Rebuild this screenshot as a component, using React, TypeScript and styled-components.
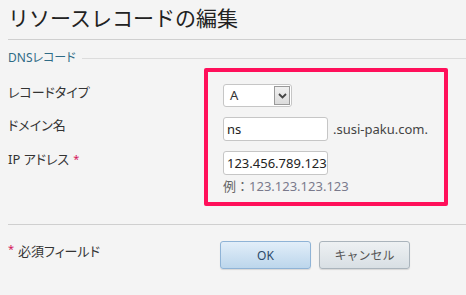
import { createGlobalStyle, styled } from "styled-components"

const Global = createGlobalStyle`
  html, body {
    margin: 0;
    background: #f4f4f4;
  }
  body {
    font-family: "Noto Sans", "Noto Sans CJK JP", sans-serif;
    color: #333;
  }
`

const Page = styled.div`
  position: relative;
  width: 466px;
  height: 295px;
  overflow: hidden;
  padding: 0 0 0 8px;
  box-sizing: border-box;
`

const Title = styled.h1`
  margin: 0;
  padding-top: 4px;
  height: 35px;
  font-size: 21px;
  font-weight: normal;
  line-height: 28px;
  color: #222;
  border-bottom: 1px solid #cfcfcf;
`

const Legend = styled.div`
  display: flex;
  align-items: center;
  gap: 6px;
  margin-top: 10px;
  font-size: 12px;
  line-height: 16px;
  color: #2f6b86;
  font-feature-settings: "palt";

  &::after {
    content: "";
    flex: 1;
    border-top: 1px solid #dcdcdc;
  }
`

const Rows = styled.div`
  display: flex;
  flex-direction: column;
  gap: 10px;
  margin-top: 18px;
`

const Row = styled.div`
  display: grid;
  grid-template-columns: 215px auto;
  align-items: start;
`

const Label = styled.div`
  font-size: 13px;
  line-height: 16px;
  font-feature-settings: "palt";
`

const Req = styled.span`
  color: #d4145a;
  font-size: 11px;
  margin-left: 4px;
  vertical-align: top;
`

const Field = styled.div`
  display: flex;
  align-items: center;
  gap: 5px;
`

const Select = styled.div`
  display: flex;
  width: 69px;
  height: 23px;
  box-sizing: border-box;
  border: 1px solid #c6c6c6;
  border-radius: 3px;
  background: #fff;
  font-size: 13px;
`

const SelectValue = styled.div`
  flex: 1;
  padding-left: 6px;
  line-height: 21px;
`

const Arrow = styled.div`
  width: 16px;
  margin: 1px;
  display: grid;
  place-items: center;
  background: linear-gradient(#f0f0f0, #dcdcdc);
  border: 1px solid #9a9a9a;
  box-sizing: border-box;
`

const Input = styled.div`
  width: 105px;
  height: 24px;
  box-sizing: border-box;
  border: 1px solid #c6c6c6;
  border-radius: 3px;
  background: #fff;
  padding: 0 3px;
  font-size: 13px;
  line-height: 22px;
  color: #222;
  white-space: nowrap;
  overflow: hidden;
`

const Suffix = styled.span`
  font-size: 13px;
  color: #444;
`

const Hint = styled.div`
  margin-top: 1px;
  font-size: 13px;
  color: #666;

  b {
    font-weight: normal;
    color: #7a7a8c;
  }
`

const Divider = styled.div`
  margin-top: 29px;
  border-top: 1px solid #cfcfcf;
`

const Footer = styled.div`
  display: grid;
  grid-template-columns: 212px auto;
  margin-top: 16px;
`

const Note = styled.div`
  font-size: 13px;
  font-feature-settings: "palt";
`

const NoteMark = styled.span`
  color: #d4145a;
  font-size: 11px;
  margin-right: 4px;
  vertical-align: top;
`

const Buttons = styled.div`
  display: flex;
  gap: 8px;
`

const Button = styled.div<{ $primary?: boolean }>`
  width: 91px;
  height: 28px;
  box-sizing: border-box;
  border-radius: 3px;
  display: grid;
  place-items: center;
  font-size: 12px;
  border: 1px solid ${(p) => (p.$primary ? "#8fb3d6" : "#aab4bc")};
  background: ${(p) =>
    p.$primary
      ? "linear-gradient(#e2eef9, #bcd6ec)"
      : "linear-gradient(#eef1f3, #d8dfe4)"};
  color: ${(p) => (p.$primary ? "#2c4a6a" : "#555")};
  box-shadow: 0 1px 1px rgba(0, 0, 0, 0.12);
`

const Highlight = styled.div`
  position: absolute;
  left: 204px;
  top: 68px;
  width: 244px;
  height: 138px;
  box-sizing: border-box;
  border: 4px solid #ff0f5a;
  border-radius: 2px;
  pointer-events: none;
`

export default function App() {
  return (
    <>
      <Global />
      <Page>
        <Title>リソースレコードの編集</Title>
        <Legend>DNSレコード</Legend>
        <Rows>
          <Row>
            <Label>レコードタイプ</Label>
            <Field>
              <Select>
                <SelectValue>A</SelectValue>
                <Arrow>
                  <svg width="9" height="6" viewBox="0 0 9 6">
                    <path d="M1 1 L4.5 4.5 L8 1" stroke="#444" strokeWidth="1.8" fill="none" />
                  </svg>
                </Arrow>
              </Select>
            </Field>
          </Row>
          <Row>
            <Label>ドメイン名</Label>
            <Field>
              <Input>ns</Input>
              <Suffix>.susi-paku.com.</Suffix>
            </Field>
          </Row>
          <Row>
            <Label>
              IP アドレス<Req>*</Req>
            </Label>
            <div>
              <Input>123.456.789.123</Input>
              <Hint>
                例：<b>123.123.123.123</b>
              </Hint>
            </div>
          </Row>
        </Rows>
        <Divider />
        <Footer>
          <Note>
            <NoteMark>*</NoteMark>必須フィールド
          </Note>
          <Buttons>
            <Button $primary>OK</Button>
            <Button>キャンセル</Button>
          </Buttons>
        </Footer>
        <Highlight />
      </Page>
    </>
  )
}
